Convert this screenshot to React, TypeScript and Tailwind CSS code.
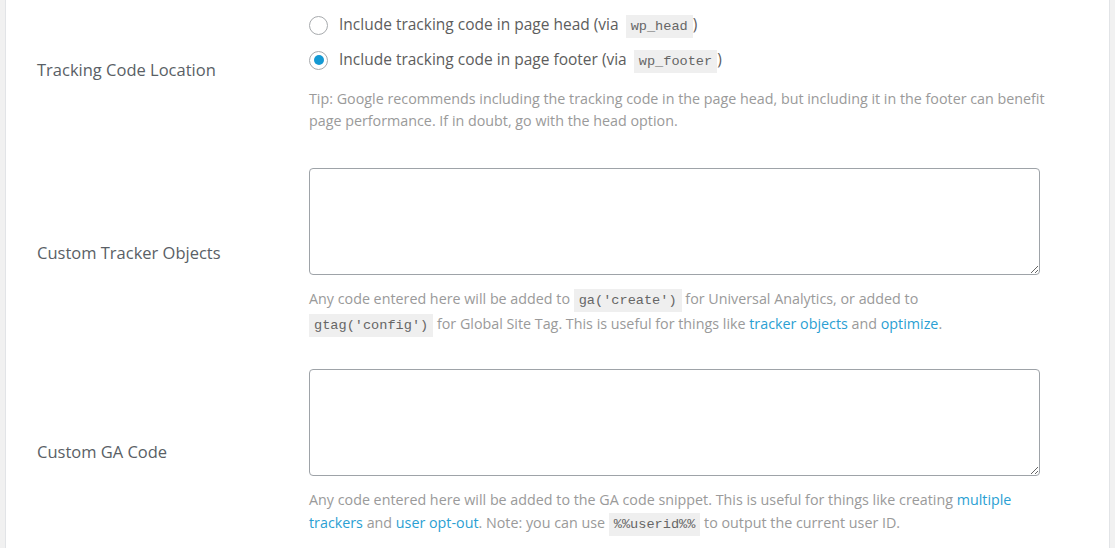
import React from 'react'

const font = { fontFamily: '"Open Sans", "Noto Sans", sans-serif' }

function Code({ children }: { children: React.ReactNode }) {
  return (
    <code className="bg-[#efefef] px-[5px] py-[4px] font-['Liberation_Mono',monospace] text-[13.6px] text-[#666]">
      {children}
    </code>
  )
}

function Link({ children }: { children: React.ReactNode }) {
  return <a className="text-[#2b9fd3]">{children}</a>
}

function Radio({ checked, children }: { checked?: boolean; children: React.ReactNode }) {
  return (
    <label className="flex h-[28px] items-center">
      <span className="mr-[11px] flex h-[19px] w-[19px] items-center justify-center rounded-full border border-[#a7aaad] bg-white">
        {checked && <span className="h-[10px] w-[10px] rounded-full bg-[#1499d3]" />}
      </span>
      <span className="whitespace-nowrap text-[15.5px] text-[#5d5d5d]">{children}</span>
    </label>
  )
}

function Row({ label, offset, children }: { label: string; offset: string; children: React.ReactNode }) {
  return (
    <div className="flex items-center">
      <div className={`w-[303px] pl-[31px] text-[16.5px] text-[#5a5f66] ${offset}`}>{label}</div>
      <div className="flex-1">{children}</div>
    </div>
  )
}

export default function App() {
  return (
    <div className="h-[548px] w-full overflow-hidden bg-[#f1f1f1]" style={font}>
      <div className="ml-[5px] h-full w-[1105px] border-x border-[#e2e4e7] bg-white">
        <div className="pt-[11px]">
          <Row label="Tracking Code Location" offset="pb-[2px]">
            <Radio>
              Include tracking code in page head (via <span className="ml-[3px]" />
              <Code>wp_head</Code>)
            </Radio>
            <div className="mt-[7px]">
              <Radio checked>
                Include tracking code in page footer (via <span className="ml-[3px]" />
                <Code>wp_footer</Code>)
              </Radio>
            </div>
            <p className="mt-[14px] whitespace-nowrap text-[14.3px] leading-[22px] text-[#9a9a9a]">
              Tip: Google recommends including the tracking code in the page head, but including it in the footer can benefit
              <br />
              page performance. If in doubt, go with the head option.
            </p>
          </Row>
        </div>

        <div className="mt-[36px]">
          <Row label="Custom Tracker Objects" offset="pt-[2px]">
            <textarea className="block h-[107px] w-[731px] rounded-[4px] border border-[#9ea3a8] bg-white" />
            <p className="mt-[12px] whitespace-nowrap text-[14.3px] leading-[23px] text-[#9a9a9a]">
              Any code entered here will be added to <Code>ga('create')</Code> for Universal Analytics, or added to
              <br />
              <Code>gtag('config')</Code> for Global Site Tag. This is useful for things like <Link>tracker objects</Link> and{' '}
              <Link>optimize</Link>.
            </p>
          </Row>
        </div>

        <div className="mt-[32px]">
          <Row label="Custom GA Code" offset="pt-[0px]">
            <textarea className="block h-[107px] w-[731px] rounded-[4px] border border-[#9ea3a8] bg-white" />
            <p className="mt-[12px] whitespace-nowrap text-[14.3px] leading-[23px] text-[#9a9a9a]">
              Any code entered here will be added to the GA code snippet. This is useful for things like creating{' '}
              <Link>multiple</Link>
              <br />
              <Link>trackers</Link> and <Link>user opt-out</Link>. Note: you can use <Code>%%userid%%</Code> to output the
              current user ID.
            </p>
          </Row>
        </div>
      </div>
    </div>
  )
}
